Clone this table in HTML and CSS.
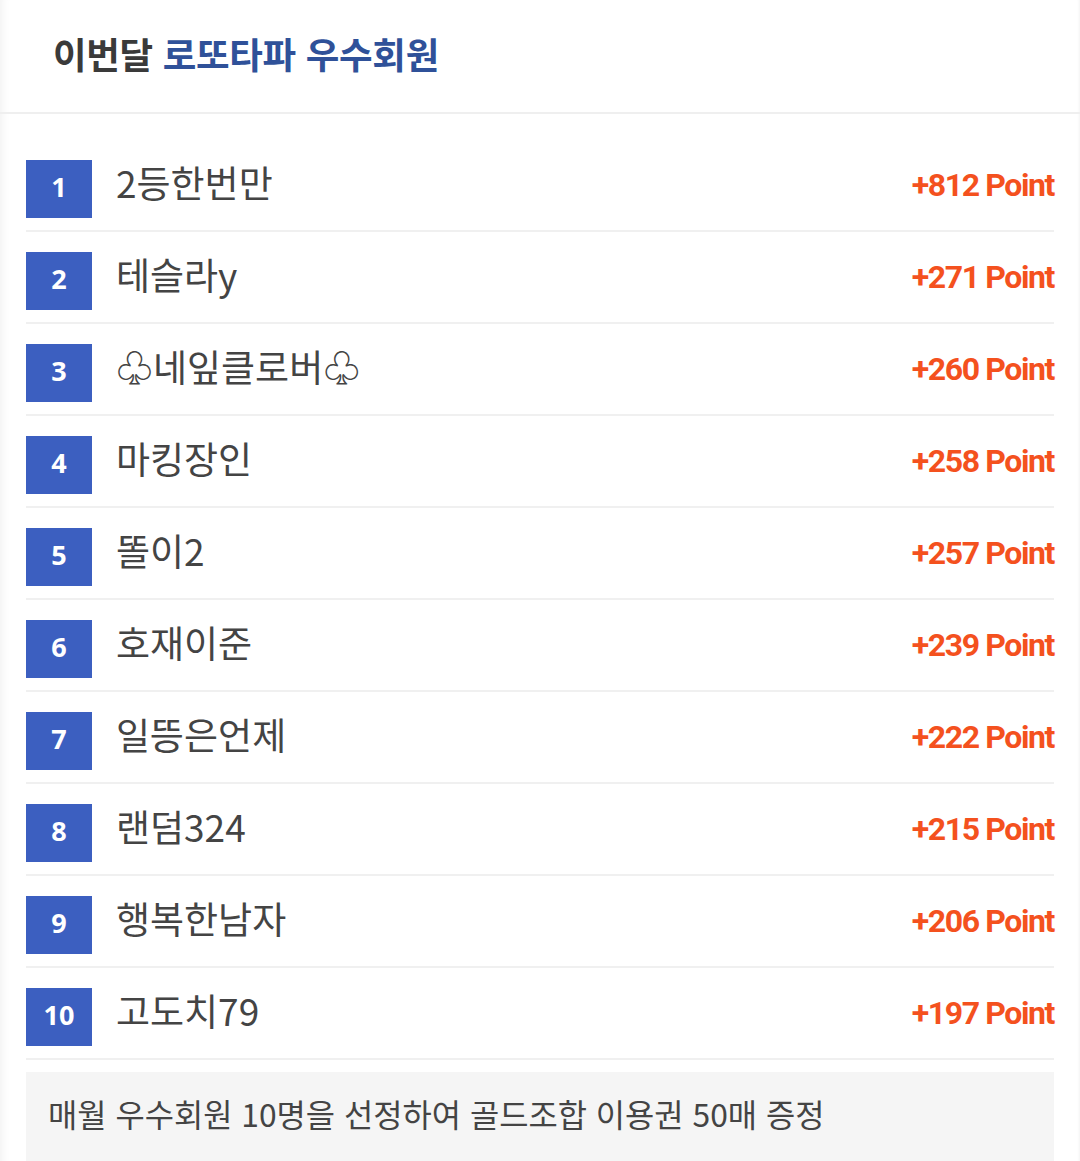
FILE: index.html
```html
<!DOCTYPE html>
<html lang="ko">
<head>
<meta charset="utf-8">
<link rel="stylesheet" href="styles.css">
</head>
<body>
<div class="card">
  <header class="head">
    <h1 class="title">이번달 <span class="accent">로또타파 우수회원</span></h1>
  </header>
  <ul class="rank">
    <li class="row"><span class="badge">1</span><span class="name">2등한번만</span><span class="pt">+812 Point</span></li>
    <li class="row"><span class="badge">2</span><span class="name">테슬라y</span><span class="pt">+271 Point</span></li>
    <li class="row"><span class="badge">3</span><span class="name">♧네잎클로버♧</span><span class="pt">+260 Point</span></li>
    <li class="row"><span class="badge">4</span><span class="name">마킹장인</span><span class="pt">+258 Point</span></li>
    <li class="row"><span class="badge">5</span><span class="name">똘이2</span><span class="pt">+257 Point</span></li>
    <li class="row"><span class="badge">6</span><span class="name">호재이준</span><span class="pt">+239 Point</span></li>
    <li class="row"><span class="badge">7</span><span class="name">일뜽은언제</span><span class="pt">+222 Point</span></li>
    <li class="row"><span class="badge">8</span><span class="name">랜덤324</span><span class="pt">+215 Point</span></li>
    <li class="row"><span class="badge">9</span><span class="name">행복한남자</span><span class="pt">+206 Point</span></li>
    <li class="row"><span class="badge">10</span><span class="name">고도치79</span><span class="pt">+197 Point</span></li>
  </ul>
  <div class="note">매월 우수회원 10명을 선정하여 골드조합 이용권 50매 증정</div>
</div>
</body>
</html>
```
FILE: styles.css
```css
html, body {
  margin: 0;
  padding: 0;
  background: #fff;
}
body {
  font-family: "Noto Sans CJK KR", "Noto Sans", sans-serif;
  color: #444;
}
.card {
  width: 1080px;
  min-height: 1161px;
  box-sizing: border-box;
  box-shadow: inset 10px 0 10px -8px rgba(0,0,0,0.06), inset -3px 0 3px -2px rgba(0,0,0,0.05);
}
.head {
  height: 112px;
  border-bottom: 2px solid #efefef;
  display: flex;
  align-items: center;
  padding-left: 53px;
}
.title {
  margin: 0;
  font-size: 36.5px;
  font-weight: 700;
  color: #3a3a3a;
  letter-spacing: -0.3px;
  position: relative;
  top: -3px;
}
.accent {
  color: #2f5199;
}
.rank {
  list-style: none;
  margin: 0;
  padding: 26px 26px 0 26px;
}
.row {
  display: flex;
  align-items: center;
  border-bottom: 2px solid #f0f0f0;
  padding-top: 8px;
  height: 82px;
}
.badge {
  width: 66px;
  height: 58px;
  box-sizing: border-box;
  padding-bottom: 5px;
  background: #3c5fc0;
  color: #fff;
  font-family: "Open Sans", "Noto Sans", sans-serif;
  font-weight: 700;
  font-size: 27px;
  line-height: 1;
  display: flex;
  align-items: center;
  justify-content: center;
  flex: none;
}
.name {
  margin-left: 24px;
  font-size: 37px;
  color: #444;
  flex: 1;
  position: relative;
  top: -7px;
}
.pt {
  font-family: Roboto, "Liberation Sans", sans-serif;
  font-weight: 700;
  font-size: 32px;
  letter-spacing: -1.4px;
  color: #f4511e;
  position: relative;
  top: -4px;
}
.note {
  margin: 12px 26px 0 26px;
  background: #f5f5f5;
  height: 100px;
  padding: 18px 22px 0;
  box-sizing: border-box;
  font-size: 31.8px;
  color: #444;
}
```
